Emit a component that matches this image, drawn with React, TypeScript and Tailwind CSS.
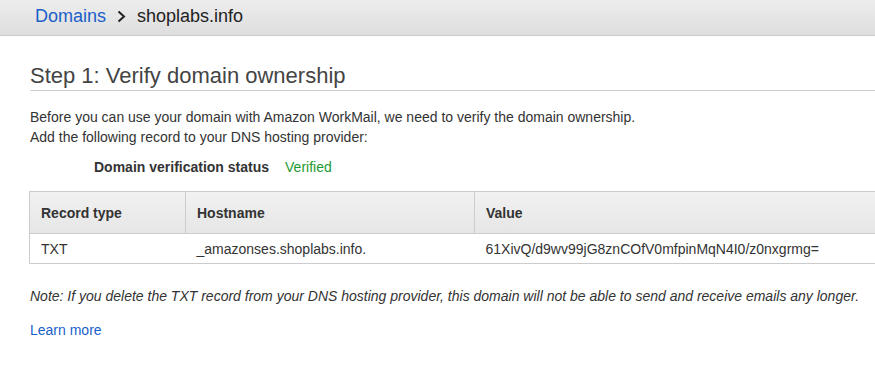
import React from "react";

const records = [
  {
    type: "TXT",
    host: "_amazonses.shoplabs.info.",
    value: "61XivQ/d9wv99jG8znCOfV0mfpinMqN4I0/z0nxgrmg=",
  },
];

export default function App() {
  return (
    <div
      className="min-h-screen w-[875px] overflow-hidden bg-white text-[#333]"
      style={{ fontFamily: '"Liberation Sans", Arial, sans-serif' }}
    >
      {/* breadcrumb bar */}
      <header className="h-[36px] border-b border-[#c9c9c9] bg-gradient-to-b from-[#ededed] to-[#dedede]">
        <div className="flex items-center pl-[35px] text-[18px] leading-[32px]">
          <a className="text-[#1b5fc9]">Domains</a>
          <svg className="mx-[11px]" width="9" height="13" viewBox="0 0 9 13">
            <polyline points="1.5,1.5 7,6.5 1.5,11.5" fill="none" stroke="#222" strokeWidth="2" />
          </svg>
          <span className="text-[#222]">shoplabs.info</span>
        </div>
      </header>

      <main className="pl-[30px]">
        <h1 className="mt-[26px] border-b border-[#cfcfcf] text-[22px] leading-[28px] text-[#444]">
          Step 1: Verify domain ownership
        </h1>

        <p className="mt-[16px] text-[14px] leading-[20px]">
          Before you can use your domain with Amazon WorkMail, we need to verify the domain ownership.
          <br />
          Add the following record to your DNS hosting provider:
        </p>

        <div className="mt-[10px] flex pl-[64px] text-[14px] leading-[20px]">
          <span className="font-bold text-[#333]">Domain verification status</span>
          <span className="ml-[16px] text-[#1f9a33]">Verified</span>
        </div>

        <table className="mt-[14px] -ml-px w-[900px] border-collapse text-[14px] leading-[20px]">
          <thead>
            <tr className="bg-gradient-to-b from-[#f1f1f1] to-[#e6e6e6]">
              <th className="h-[42px] w-[156px] border border-[#cccccc] px-[11px] text-left font-bold">Record type</th>
              <th className="h-[42px] w-[289px] border border-[#cccccc] px-[11px] text-left font-bold">Hostname</th>
              <th className="h-[42px] border border-[#cccccc] px-[11px] text-left font-bold">Value</th>
            </tr>
          </thead>
          <tbody>
            {records.map((r) => (
              <tr key={r.value}>
                <td className="h-[30px] border-y border-l border-[#cccccc] px-[11px]">{r.type}</td>
                <td className="h-[30px] border-y border-[#cccccc] px-[11px]">{r.host}</td>
                <td className="h-[30px] border-y border-[#cccccc] px-[11px]">{r.value}</td>
              </tr>
            ))}
          </tbody>
        </table>

        <p className="mt-[22px] text-[14px] italic leading-[20px]">
          Note: If you delete the TXT record from your DNS hosting provider, this domain will not be able to send and receive emails any longer.
        </p>

        <a className="mt-[14px] block text-[14px] leading-[20px] text-[#1b5fc9]">Learn more</a>
      </main>
    </div>
  );
}
